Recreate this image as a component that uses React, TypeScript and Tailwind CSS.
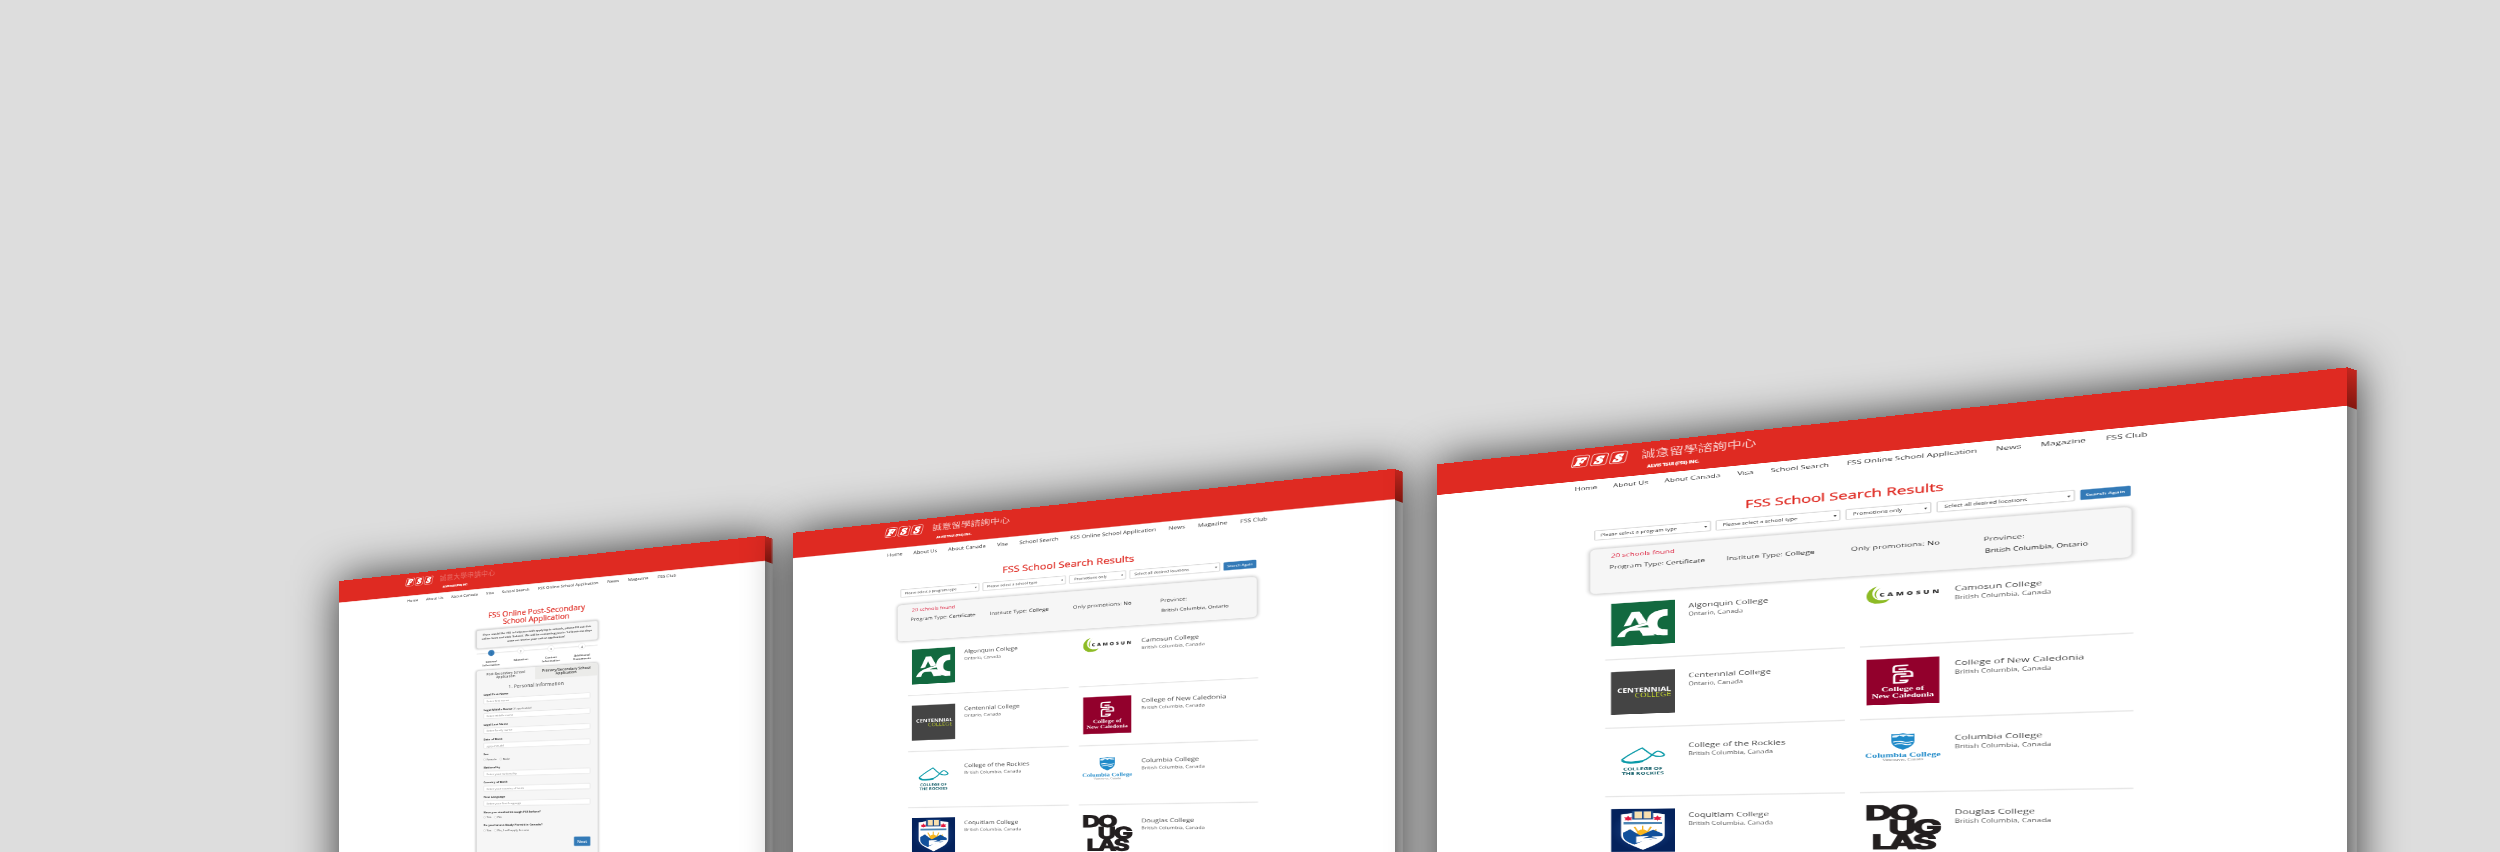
import type { ReactNode } from "react";

const navItems = [
  "Home",
  "About Us",
  "About Canada",
  "Visa",
  "School Search",
  "FSS Online School Application",
  "News",
  "Magazine",
  "FSS Club",
];

function FssMark() {
  return (
    <div className="flex w-[132px] justify-between">
      {["F", "S", "S"].map((letter, i) => (
        <span
          key={i}
          className="flex h-[42px] w-[40px] -skew-x-12 items-center justify-center rounded-[8px] border-2 border-white/80 font-['Liberation_Serif',serif] text-[38px] leading-none font-bold text-white italic"
        >
          <span className="[-webkit-text-stroke:4px_white]">{letter}</span>
        </span>
      ))}
    </div>
  );
}

function SiteHeader({ name, faded }: { name: string; faded?: boolean }) {
  return (
    <>
      <header className="flex h-[114px] bg-[#df2a22] pt-[23px] pl-[343px]">
        <FssMark />
        <div className="ml-[34px] whitespace-nowrap text-white">
          <div
            className={
              "-mt-[5px] font-['Noto_Sans_CJK_TC',sans-serif] text-[33px] leading-[44px] " +
              (faded ? "opacity-30" : "opacity-75")
            }
          >
            {name}
          </div>
          <div className="mt-[13px] ml-[14px] text-[12.5px] leading-[20px] font-bold tracking-[-0.3px] [-webkit-text-stroke:0.6px_white]">
            ALVIS TSUI (FSS) INC.
          </div>
        </div>
      </header>
      <nav className="flex h-[54px] items-center gap-[38px] pl-[349px] text-[19.5px] whitespace-nowrap text-[#333]">
        {navItems.map((item) => (
          <span key={item}>{item}</span>
        ))}
      </nav>
    </>
  );
}

function AlgonquinLogo() {
  return (
    <svg viewBox="0 0 151 151" className="block h-[151px] w-[151px]">
      <rect width="151" height="151" fill="#12693f" />
      <path d="M49 34 H68 L86 74 L66 78 L57 54 L47 80 L30 83 Z" fill="#fff" />
      <path d="M134 31 C102 31 86 46 85 74 C58 82 24 88 15 120 H33 C35 108 38 102 46 100 H68 L76 120 H104 L100 114 C110 122 122 122 134 122 V102 C117 102 110 94 110 80 C110 62 118 54 134 54 Z" fill="#fff" />
      <path d="M62 90 C72 86 80 84 87 83 L90 92 C82 90 72 90 62 90 Z" fill="#12693f" />
    </svg>
  );
}

function CentennialLogo() {
  return (
    <div className="flex h-[151px] w-[151px] flex-col justify-center bg-[#444] pr-[9px] text-right text-[20px] leading-[18px] font-bold whitespace-nowrap">
      <span className="text-white">CENTENNIAL</span>
      <span className="font-medium text-[#c3d52d]">COLLEGE</span>
    </div>
  );
}

function RockiesLogo() {
  return (
    <div className="flex h-[151px] w-[151px] flex-col items-center pt-[25px]">
      <svg viewBox="0 0 104 60" className="h-[60px] w-[104px]" fill="none" stroke="#0a9aa8">
        <path d="M2 44 C18 26 36 14 50 4 C60 14 68 28 80 33 C92 38 103 34 102 29 C97 20 89 16 86 17 C76 20 72 40 50 50 C30 58 4 56 2 44 Z" strokeWidth="4" />
        <path d="M3 46 C8 57 34 56 52 50" strokeWidth="7" />
      </svg>
      <div className="mt-[7px] w-[108px] text-center text-[15.5px] leading-[17px] font-bold whitespace-nowrap text-[#17616b]">
        COLLEGE OF
        <br />
        THE ROCKIES
      </div>
    </div>
  );
}

function CoquitlamLogo() {
  return (
    <svg viewBox="0 0 151 151" className="block h-[151px] w-[151px]">
      <defs>
        <radialGradient id="navy">
          <stop offset="0" stopColor="#1d4a92" />
          <stop offset="1" stopColor="#04225c" />
        </radialGradient>
      </defs>
      <rect width="151" height="151" fill="url(#navy)" />
      <path d="M24 20 Q75 6 127 20 V92 C127 118 98 130 76 145 C54 130 24 118 24 92 Z" fill="#fff" />
      <rect x="50" y="8" width="50" height="30" fill="#1f4d8c" />
      <path d="M56 10 H73 V34 H56 Z M78 10 H95 V34 H78 Z" fill="#f8dfae" />
      <path d="M41 24 l3 6 7 0 -4 6 3 4 -8 0 -1 5 -1 -5 -8 0 3 -4 -4 -6 7 0 Z M110 24 l3 6 7 0 -4 6 3 4 -8 0 -1 5 -1 -5 -8 0 3 -4 -4 -6 7 0 Z" fill="#e2193f" />
      <rect x="30" y="47" width="91" height="8" fill="#4d86b4" />
      <path d="M75 60 V88 M56 64 L66 86 M95 64 L85 86 M42 74 L62 90 M108 74 L88 90" stroke="#f5b321" strokeWidth="4" />
      <circle cx="75" cy="86" r="13" fill="#f9b51e" />
      <path d="M29 84 L46 72 L58 84 L70 94 L88 82 L100 74 L122 88 V97 L96 98 L110 104 L78 112 L56 126 C40 118 29 110 29 94 Z" fill="#11509b" />
      <path d="M60 98 L92 96 L76 104 L112 101 L60 120 Z" fill="#fff" />
    </svg>
  );
}

function CamosunLogo() {
  return (
    <div className="flex h-[58px] w-[151px] items-center">
      <svg viewBox="0 0 48 58" className="h-[58px] w-[48px] shrink-0" fill="#8dbb25">
        <path d="M24 0 C-6 10 -8 50 18 57 C34 60 44 54 48 44 C36 50 22 48 16 38 C8 24 14 8 24 0 Z" />
        <path d="M31 5 C12 14 12 36 26 44 C18 32 20 16 31 5 Z" stroke="#fff" strokeWidth="2" />
      </svg>
      <span className="-ml-[21px] text-[17px] font-extrabold tracking-[5.6px] text-[#333]">CAMOSUN</span>
    </div>
  );
}

function CaledoniaLogo() {
  return (
    <div className="flex h-[151px] w-[151px] flex-col items-center bg-[#92002c] pt-[20px] font-['Liberation_Serif',serif] text-[21px] leading-[22px] font-bold whitespace-nowrap text-white">
      <svg viewBox="0 0 46 66" className="mb-[3px] h-[66px] w-[46px]" fill="none" stroke="#fff" strokeWidth="5">
        <path d="M34 4 H12 Q4 4 4 12 V24 H24" />
        <path d="M14 16 H30 M24 24 H34 Q42 24 42 32 V40 H18" />
        <path d="M30 32 H12 Q5 32 5 40 V60 H24 Q32 60 32 53 H16" />
      </svg>
      <span>College of</span>
      <span className="text-[20px]">New Caledonia</span>
    </div>
  );
}

function ColumbiaLogo() {
  return (
    <div className="flex h-[151px] w-[151px] flex-col items-center pt-[4px] font-['Liberation_Serif',serif] whitespace-nowrap">
      <svg viewBox="0 0 50 56" className="h-[56px] w-[50px]">
        <path d="M1 3 Q12 5 25 1 Q38 5 49 3 V26 C49 42 36 50 25 55 C14 50 1 42 1 26 Z" fill="#1f8ac9" />
        <path d="M3 8 Q25 2 47 8 V12 H36 L32 8 L26 13 L18 8 L12 14 L3 14 Z" fill="#e8f4fb" />
        <path d="M5 29 Q14 25 25 29 T46 28 M8 37 Q18 33 28 37 T42 36" stroke="#fff" strokeWidth="3" fill="none" />
      </svg>
      <span className="mt-[6px] text-[20.5px] leading-[20px] font-bold text-[#1f8ac9]">Columbia College</span>
      <span className="text-[11px] leading-[11px] text-[#777]">Vancouver, Canada</span>
    </div>
  );
}

function DouglasLogo() {
  return (
    <div className="flex h-[151px] w-[151px] flex-col font-['Inter',sans-serif] text-[65px] leading-[48px] font-bold tracking-[-5px] whitespace-nowrap text-[#231f20] [-webkit-text-stroke:4px_#231f20]">
      <span className="-ml-[3px] origin-left scale-x-120">DO</span>
      <span className="ml-[46px] origin-left scale-x-120">UG</span>
      <span className="ml-[11px] origin-left scale-x-115">LAS</span>
    </div>
  );
}

const schools: { name: string; place: string; logo: ReactNode }[] = [
  { name: "Algonquin College", place: "Ontario, Canada", logo: <AlgonquinLogo /> },
  { name: "Camosun College", place: "British Columbia, Canada", logo: <CamosunLogo /> },
  { name: "Centennial College", place: "Ontario, Canada", logo: <CentennialLogo /> },
  { name: "College of New Caledonia", place: "British Columbia, Canada", logo: <CaledoniaLogo /> },
  { name: "College of the Rockies", place: "British Columbia, Canada", logo: <RockiesLogo /> },
  { name: "Columbia College", place: "British Columbia, Canada", logo: <ColumbiaLogo /> },
  { name: "Coquitlam College", place: "British Columbia, Canada", logo: <CoquitlamLogo /> },
  { name: "Douglas College", place: "British Columbia, Canada", logo: <DouglasLogo /> },
];

function Select({ label, className }: { label: string; className: string }) {
  return (
    <div
      className={
        "flex h-[36px] items-center justify-between rounded-[4px] border-[3px] border-[#dadada] pr-[6px] pl-[13px] text-[13.5px] text-[#333] " +
        className
      }
    >
      <span>{label}</span>
      <span className="text-[11px]">▾</span>
    </div>
  );
}

function ResultsPage() {
  return (
    <div className="h-[1500px] w-[1920px] overflow-hidden bg-white font-['Open_Sans',sans-serif] whitespace-nowrap">
      <SiteHeader name="誠意留學諮詢中心" />
      <h1 className="mt-[56px] text-center text-[35.3px] leading-[48px] font-medium text-[#df2a22] [-webkit-text-stroke:0.7px_#df2a22]">
        FSS School Search Results
      </h1>
      <div className="mt-[24px] ml-[396px] flex h-[34px] items-center gap-[10px]">
        <Select label="Please select a program type" className="w-[275px]" />
        <Select label="Please select a school type" className="w-[276px]" />
        <Select label="Promotions only" className="w-[180px]" />
        <Select label="Select all desired locations" className="w-[274px]" />
        <button className="h-[32px] w-[95px] rounded-[3px] bg-[#337ab7] text-[12px] font-semibold text-white">
          Search Again
        </button>
      </div>
      <section className="mt-[32px] ml-[386px] grid h-[159px] w-[1152px] grid-cols-[273px_273px_273px_1fr] rounded-[14px] border border-[#ddd] bg-[#f6f6f6] pt-[5px] pl-[46px] text-[19px] leading-[40px] text-[#444] shadow-[0_0_10px_3px_rgba(0,0,0,0.2)]">
        <div>
          <p className="pl-[4px] text-[#dc2440]">20 schools found</p>
          <p>
            Program Type: <span className="text-[#222]">Certificate</span>
          </p>
        </div>
        <p className="pt-[40px]">
          Institute Type: <span className="text-[#222]">College</span>
        </p>
        <p className="pt-[40px]">
          Only promotions: <span className="text-[#222]">No</span>
        </p>
        <div className="pt-[40px]">
          <p>Province:</p>
          <p className="pl-[3px] text-[17px] text-[#222]">British Columbia, Ontario</p>
        </div>
      </section>
      <section className="-mt-[4px] ml-[423px] grid grid-cols-[543px_543px] gap-x-[32px]">
        {schools.map((school) => (
          <article key={school.name} className="flex h-[242px] border-b-4 border-[#e6e6e6] pt-[42px] pl-[14px]">
            <div className="w-[182px]">{school.logo}</div>
            <div className="pt-[6px]">
              <h2 className="text-[21.5px] leading-[32px] text-[#444]">{school.name}</h2>
              <p className="text-[16.3px] leading-[28px] text-[#555]">{school.place}</p>
            </div>
          </article>
        ))}
      </section>
    </div>
  );
}

const steps = [
  ["General", "Information"],
  ["Education", ""],
  ["Contact", "Information"],
  ["Additional", "Documents"],
];

function Field({ label, note, placeholder }: { label: string; note?: string; placeholder: string }) {
  return (
    <div className="h-[74px]">
      <div className="mb-[7px] text-[14px] leading-[20px] font-bold text-[#333]">
        {label} {note && <span className="font-normal text-[#666]">{note}</span>}
      </div>
      <div className="flex h-[29px] items-center rounded-[4px] border-[3px] border-[#e4e4e4] bg-white pl-[12px] text-[14px] text-[#888]">
        {placeholder}
      </div>
    </div>
  );
}

function Choice({ label, options }: { label: string; options: string[] }) {
  return (
    <div className="h-[66px]">
      <div className="mb-[6px] text-[14px] leading-[20px] font-bold text-[#333]">{label}</div>
      <div className="flex gap-[14px] text-[14px] leading-[20px] text-[#444]">
        {options.map((option) => (
          <span key={option} className="flex items-center gap-[4px]">
            <span className="h-[11px] w-[11px] rounded-full border border-[#999] bg-white" />
            {option}
          </span>
        ))}
      </div>
    </div>
  );
}

function ApplicationPage() {
  return (
    <div className="h-[1500px] w-[1920px] overflow-hidden bg-white font-['Open_Sans',sans-serif]">
      <SiteHeader name="誠意大學申請中心" faded />
      <main className="ml-[686px] w-[549px]">
        <h1 className="mt-[61px] text-center text-[35.3px] leading-[38px] font-medium whitespace-nowrap text-[#df2a22] [-webkit-text-stroke:0.7px_#df2a22]">
          FSS Online Post-Secondary
          <br />
          School Application
        </h1>
        <div className="mt-[17px] h-[90px] rounded-[10px] border border-[#ddd] bg-[#f6f6f6] px-[10px] pt-[12px] text-center text-[13.5px] leading-[20px] font-semibold text-[#333] shadow-[0_0_10px_3px_rgba(0,0,0,0.2)]">
          If you would like FSS to help you with applying to schools, please fill out this online form and click
          'Submit'. We will be contacting you in 1-2 business days once we receive your online application!
        </div>
        <div className="mt-[12px] grid h-[84px] grid-cols-4 bg-[linear-gradient(#ddd,#ddd)] bg-[length:100%_3px] bg-[position:0_14px] bg-no-repeat">
          {steps.map(([first, second], i) => (
            <div key={first} className="flex flex-col items-center text-[14px] leading-[19px] font-semibold text-[#333]">
              <span
                className={
                  "mb-[16px] flex h-[30px] w-[30px] shrink-0 items-center justify-center rounded-full border " +
                  (i === 0 ? "border-[#337ab7] bg-[#337ab7] text-[#235b8c]" : "border-[#ccc] bg-white text-[#777]")
                }
              >
                {i + 1}
              </span>
              <span>{first}</span>
              <span>{second}</span>
            </div>
          ))}
        </div>
        <section className="mt-[16px] h-[1100px] rounded-t-[12px] bg-[#f6f6f6] shadow-[0_0_10px_3px_rgba(0,0,0,0.2)]">
          <div className="grid h-[60px] grid-cols-[271px_278px] text-center text-[17px] leading-[18px] font-medium text-[#333]">
            <div className="px-[30px] pt-[10px]">Post-Secondary School Application</div>
            <div className="rounded-tr-[12px] bg-[#ebebe9] px-[10px] pt-[10px] font-semibold">
              Primary/Secondary School Application
            </div>
          </div>
          <div className="px-[32px]">
            <h2 className="text-center text-[23px] leading-[52px] text-[#444]">1. Personal Information</h2>
            <Field label="Legal First Name" placeholder="Enter first name" />
            <Field label="Legal Middle Name" note="(if applicable)" placeholder="Enter middle name" />
            <Field label="Legal Last Name" placeholder="Enter family name" />
            <Field label="Date of Birth" placeholder="yyyy-mm-dd" />
            <Choice label="Sex" options={["Female", "Male"]} />
            <Field label="Nationality" placeholder="Enter your nationality" />
            <Field label="Country of Birth" placeholder="Enter your country of birth" />
            <Field label="First Language" placeholder="Enter your first language" />
            <Choice label="Have you studied through FSS before?" options={["Yes", "No"]} />
            <Choice label="Do you have a Study Permit in Canada?" options={["Yes", "No, I will apply for one"]} />
            <button className="mt-[4px] ml-auto block h-[45px] w-[72px] rounded-[4px] bg-[#337ab7] text-[18px] font-semibold text-white">
              Next
            </button>
          </div>
        </section>
      </main>
    </div>
  );
}

function Slab({
  shadow,
  face,
  scale,
  side,
  sideTop,
  children,
}: {
  shadow: string;
  face: string;
  scale: string;
  side: string;
  sideTop: string;
  children: ReactNode;
}) {
  return (
    <>
      <div className="absolute inset-0 overflow-hidden">
        <div className="h-full w-full blur-[23px]">
          <div className={"absolute h-[900px] origin-top-left -skew-y-[6.09deg] bg-black/75 " + shadow} />
        </div>
      </div>
      <div
        className={
          "absolute h-[700px] origin-top-left skew-y-[20deg] bg-[linear-gradient(90deg,#7d7d7d,#a0a0a0)] " + side
        }
      >
        <div className={"bg-[linear-gradient(#c3261f,#84170f)] " + sideTop} />
      </div>
      <div className={"absolute top-0 left-0 origin-top-left overflow-hidden " + face}>
        <div className={"origin-top-left " + scale}>{children}</div>
      </div>
    </>
  );
}

export default function App() {
  return (
    <div className="relative h-[852px] w-[2500px] overflow-hidden bg-[#ddd]">
      <Slab
        shadow="left-[339px] top-[581px] w-[433px]"
        face="h-[450px] w-[576px] [transform:matrix3d(0.5522,-0.20963,0,-0.00024433,0,0.63267,0,0,0,0,1,0,339,581,0,1)]"
        scale="scale-30"
        side="left-[764.5px] top-[535.8px] w-[7px]"
        sideTop="h-[25px]"
      >
        <ApplicationPage />
      </Slab>
      <Slab
        shadow="left-[793px] top-[532.8px] w-[610px]"
        face="h-[600px] w-[768px] [transform:matrix3d(0.484675,-0.184,0,-0.00021445,0,0.5575,0,0,0,0,1,0,793,532.8,0,1)]"
        scale="scale-40"
        side="left-[1395px] top-[468.8px] w-[8px]"
        sideTop="h-[30.5px]"
      >
        <ResultsPage />
      </Slab>
      <Slab
        shadow="left-[1437px] top-[464.3px] w-[920px]"
        face="h-[750px] w-[960px] [transform:matrix3d(0.46494,-0.17652,0,-0.00020572,0,0.54,0,0,0,0,1,0,1437,464.3,0,1)]"
        scale="scale-50"
        side="left-[2347px] top-[367.3px] w-[10px]"
        sideTop="h-[38.5px]"
      >
        <ResultsPage />
      </Slab>
    </div>
  );
}
